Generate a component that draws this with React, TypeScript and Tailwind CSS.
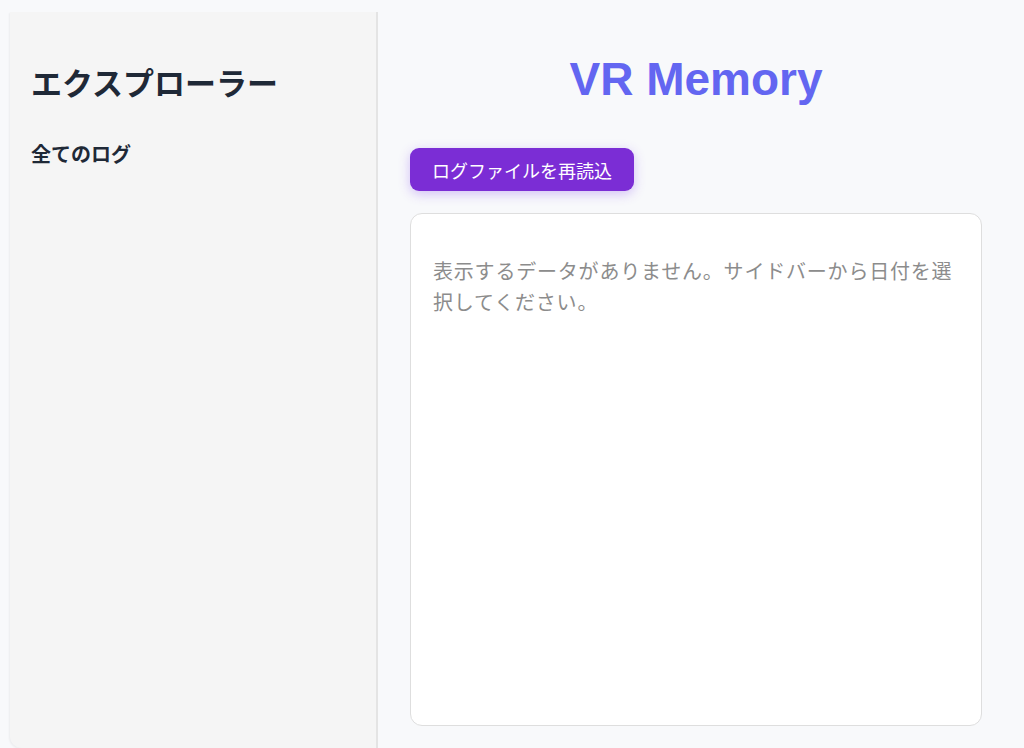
import React from "react";

const jp = '"Noto Sans CJK JP", "Noto Sans", sans-serif';

function Sidebar() {
  return (
    <aside
      className="flex h-full w-[368px] flex-col rounded-bl-[12px] border-r-2 border-[#e4e4e4] bg-[#f5f5f5] pl-[21px] pt-[52px] shadow-[-1px_1px_2px_rgba(0,0,0,0.05)]"
      style={{ fontFamily: jp }}
    >
      <h2 className="text-[31px] font-bold leading-[36px] text-[#1f2937]">エクスプローラー</h2>
      <div className="mt-[40px] text-[20px] font-bold leading-[28px] text-[#1f2937]">全てのログ</div>
    </aside>
  );
}

function MainPanel() {
  return (
    <main className="flex min-w-0 flex-1 flex-col pb-[22px] pl-[32px] pr-[42px] pt-[56px]">
      <h1
        className="text-center text-[46px] font-bold leading-[46px] text-[#6366f1]"
        style={{ fontFamily: '"Liberation Sans", Arial, sans-serif' }}
      >
        VR Memory
      </h1>
      <div className="mt-[46px]">
        <button
          className="h-[43px] rounded-[9px] bg-[#7b2dd5] px-[22px] text-[18px] leading-none text-white shadow-[0_3px_12px_rgba(124,58,237,0.3)]"
          style={{ fontFamily: jp }}
        >
          ログファイルを再読込
        </button>
      </div>
      <section className="mt-[22px] flex-1 rounded-[12px] border border-[#dedede] bg-white px-[22px] pt-[41px]">
        <p
          className="text-[20px] leading-[31px] tracking-[0.8px] text-[#8c8c8c]"
          style={{ fontFamily: jp }}
        >
          表示するデータがありません。サイドバーから日付を選択してください。
        </p>
      </section>
    </main>
  );
}

export default function App() {
  return (
    <div className="flex h-[748px] w-full overflow-hidden bg-[#f8f9fb]">
      <div className="h-full pl-[10px] pt-[12px]">
        <Sidebar />
      </div>
      <MainPanel />
    </div>
  );
}
